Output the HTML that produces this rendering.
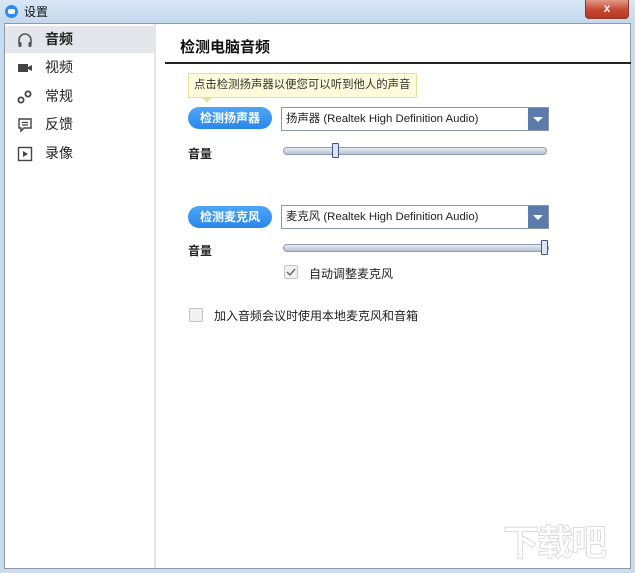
<!DOCTYPE html>
<html><head><meta charset="utf-8"><style>
*{margin:0;padding:0;box-sizing:border-box}
body{width:635px;height:573px;overflow:hidden;background:#c9dcee;font-family:"Liberation Sans","Noto Sans CJK SC",sans-serif;position:relative}
.tb{position:absolute;left:0;top:0;width:635px;height:23px;background:linear-gradient(#d9e7f5,#c4d8ee)}
.close{position:absolute;left:585px;top:0;width:44px;height:19px;background:linear-gradient(#e29a88,#c7462f 55%,#b53a22);border:1px solid #8a3a2e;border-top:none;border-radius:0 0 4px 4px;color:#fff;font-size:12px;font-weight:bold;text-align:center;line-height:17px}
.win{position:absolute;left:4px;top:23px;width:627px;height:546px;background:#fff;border:1px solid #8e9aa8}
.side{position:absolute;left:0;top:0;width:151px;height:100%;border-right:2px solid #e4e4e4}
.it{position:absolute;left:0;width:151px;height:27px;font-size:14px;color:#222;line-height:27px;padding-left:40px}
.it svg{position:absolute;left:12px;top:6px}
.sel{background:#e4e6ec;font-weight:bold}
.t{position:absolute;font-size:12px;color:#222;white-space:nowrap}
.btn{position:absolute;width:84px;height:22px;border-radius:11px;background:linear-gradient(#4fa6f5,#2a86ea);color:#fff;font-size:12px;font-weight:bold;text-align:center;line-height:22px}
.sel2{position:absolute;width:268px;height:24px;border:1px solid #8797ad;background:#fff;font-size:11.4px;line-height:22px;padding-left:4px;color:#222;white-space:nowrap}
.sel2 .ar{position:absolute;right:0;top:0;width:20px;height:22px;background:#5b7caa}
.sel2 .ar:after{content:"";position:absolute;left:5px;top:9px;border-left:5px solid transparent;border-right:5px solid transparent;border-top:5px solid #fff}
.sl{position:absolute;height:8px;border:1px solid #8f9cb0;border-radius:4px;background:linear-gradient(#e6ebf2,#b7c3d3)}
.th{position:absolute;width:7px;height:15px;border:1px solid #3e5a86;background:#dbe5f2;border-radius:1px}
.cb{position:absolute;width:14px;height:14px;border:1px solid #c4c4c4;border-radius:2px;background:#f1f1f1}
</style></head><body>
<div class="tb">
<div style="position:absolute;left:5px;top:5px;width:13px;height:13px;border-radius:50%;background:#2d8cf0"><div style="position:absolute;left:3px;top:4px;width:7px;height:5px;background:#fff;border-radius:2px"></div></div>
<div style="position:absolute;left:24px;top:3px;font-size:12px;color:#111">设置</div>
<div class="close">x</div>
</div>
<div class="win">
<div class="side">
<div class="it sel" style="top:2px"><svg width="16" height="16" viewBox="0 0 16 16"><path d="M2 12V8a6 6 0 0 1 12 0v4" fill="none" stroke="#555" stroke-width="1.6"/><rect x="1.5" y="10" width="3" height="5" rx="1" fill="#555"/><rect x="11.5" y="10" width="3" height="5" rx="1" fill="#555"/></svg>音频</div>
<div class="it" style="top:30px"><svg width="16" height="16" viewBox="0 0 16 16"><rect x="1" y="4" width="10" height="8" fill="#444"/><path d="M11 7l4-2v6l-4-2z" fill="#444"/></svg>视频</div>
<div class="it" style="top:59px"><svg width="16" height="16" viewBox="0 0 16 16"><circle cx="4" cy="11" r="2.6" fill="none" stroke="#444" stroke-width="1.8"/><circle cx="11" cy="5" r="2.6" fill="none" stroke="#444" stroke-width="1.8"/></svg>常规</div>
<div class="it" style="top:87px"><svg width="16" height="16" viewBox="0 0 16 16"><path d="M2 2h12v9H7l-3 3v-3H2z" fill="none" stroke="#444" stroke-width="1.4"/><path d="M5 5.5h6M5 8h6" stroke="#444" stroke-width="1.2"/></svg>反馈</div>
<div class="it" style="top:116px"><svg width="16" height="16" viewBox="0 0 16 16"><rect x="1.5" y="1.5" width="13" height="13" fill="none" stroke="#444" stroke-width="1.4"/><path d="M6 5v6l5-3z" fill="#444"/></svg>录像</div>
</div>
<div style="position:absolute;left:175px;top:12px;font-size:15px;font-weight:bold;color:#111">检测电脑音频</div>
<div style="position:absolute;left:160px;top:38px;width:466px;height:2px;background:#222"></div>
<div style="position:absolute;left:183px;top:49px;width:229px;height:25px;background:#fdfbd9;border:1px solid #e6df9e;font-size:11.4px;color:#333;line-height:23px;padding-left:5px;white-space:nowrap;overflow:hidden">点击检测扬声器以便您可以听到他人的声音</div>
<div style="position:absolute;left:197px;top:73px;width:0;height:0;border-left:5px solid transparent;border-right:5px solid transparent;border-top:6px solid #e6df9e"></div>
<div class="btn" style="left:183px;top:83px">检测扬声器</div>
<div class="sel2" style="left:276px;top:83px">扬声器 (Realtek High Definition Audio)<div class="ar"></div></div>
<div class="t" style="left:183px;top:121px;font-weight:bold">音量</div>
<div class="sl" style="left:278px;top:123px;width:264px"></div>
<div class="th" style="left:327px;top:119px"></div>
<div class="btn" style="left:183px;top:182px">检测麦克风</div>
<div class="sel2" style="left:276px;top:181px">麦克风 (Realtek High Definition Audio)<div class="ar"></div></div>
<div class="t" style="left:183px;top:218px;font-weight:bold">音量</div>
<div class="sl" style="left:278px;top:220px;width:266px"></div>
<div class="th" style="left:536px;top:216px"></div>
<div class="cb" style="left:279px;top:241px"><svg width="12" height="12" viewBox="0 0 12 12" style="position:absolute;left:0;top:0"><path d="M2 6l3 3 5-6" fill="none" stroke="#666" stroke-width="1.4"/></svg></div>
<div class="t" style="left:304px;top:241px">自动调整麦克风</div>
<div class="cb" style="left:184px;top:284px"></div>
<div class="t" style="left:209px;top:283px">加入音频会议时使用本地麦克风和音箱</div>
<div style="position:absolute;left:498px;top:490px;font-size:36px;color:#fff;-webkit-text-stroke:1px #dcdcdc;font-weight:bold;letter-spacing:-2px">下载吧</div>
</div>
</body></html>
